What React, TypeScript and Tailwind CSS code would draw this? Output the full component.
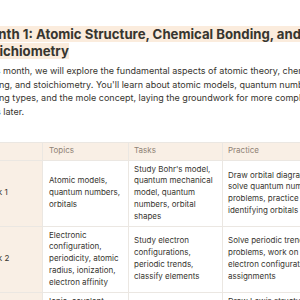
import React from 'react';

const rows = [
  {
    week: 'Week 1',
    topics: 'Atomic models, quantum numbers, orbitals',
    tasks: "Study Bohr's model, quantum mechanical model, quantum numbers, orbital shapes",
    practice: 'Draw orbital diagrams, solve quantum number problems, practice identifying orbitals',
  },
  {
    week: 'Week 2',
    topics: 'Electronic configuration, periodicity, atomic radius, ionization, electron affinity',
    tasks: 'Study electron configurations, periodic trends, classify elements',
    practice: 'Solve periodic trend problems, work on electron configuration assignments',
  },
  {
    week: 'Week 3',
    topics: 'Ionic, covalent, metallic bonding, Lewis structures, VSEPR theory, hybridization',
    tasks: 'Study bond types, molecular geometry',
    practice: 'Draw Lewis structures, predict molecular shapes, practice hybridization problems',
  },
];

export default function App() {
  return (
    <div className="w-[300px] h-[300px] overflow-hidden bg-white text-[#37352f] font-['Inter',sans-serif]">
      <div className="ml-[-25px] w-[460px] pt-[26px]">
        <h2 className="ml-[3px] w-[370px] text-[13.2px] leading-[17px] font-bold">
          <span className="bg-[#fbecdd]">Month 1: Atomic Structure, Chemical Bonding, and Stoichiometry</span>
        </h2>
        <p className="mt-[4px] w-[356px] text-[9px] leading-[13.7px]">
          In this month, we will explore the fundamental aspects of atomic theory, chemical bonding, and stoichiometry. You'll learn about atomic models, quantum numbers, bonding types, and the mole concept, laying the groundwork for more complex topics later.
        </p>
        <table className="ml-[-1px] mt-[23px] table-fixed w-[420px] border-collapse text-[8px] leading-[11.8px]">
          <colgroup>
            <col className="w-[68px]" />
            <col className="w-[86px]" />
            <col className="w-[94px]" />
            <col className="w-[99px]" />
            <col />
          </colgroup>
          <thead>
            <tr className="bg-[#f9efe5] text-[#8f8275]">
              <th className="border border-[#ebe7e2] px-[6px] py-[2.5px] text-left font-normal"></th>
              <th className="border border-[#ebe7e2] px-[6px] py-[2.5px] text-left font-normal">Topics</th>
              <th className="border border-[#ebe7e2] px-[5px] py-[2.5px] text-left font-normal">Tasks</th>
              <th className="border border-[#ebe7e2] px-[5px] py-[2.5px] text-left font-normal">Practice</th>
              <th className="border border-[#ebe7e2] px-[5px] py-[2.5px] text-left font-normal">Notes</th>
            </tr>
          </thead>
          <tbody>
            {rows.map((r, i) => {
              const al = i === 2 ? 'align-top' : 'align-middle';
              return (
                <tr key={r.week}>
                  <td className="bg-[#f9efe5] border border-[#ebe7e2] px-[6px] py-[3px] align-middle">{r.week}</td>
                  <td className={`border border-[#ebe7e2] px-[6px] py-[3px] ${al}`}>{r.topics}</td>
                  <td className="border border-[#ebe7e2] px-[5px] py-[3px] align-middle">{r.tasks}</td>
                  <td className={`border border-[#ebe7e2] px-[5px] py-[3px] ${al}`}>{r.practice}</td>
                  <td className="border border-[#ebe7e2] px-[5px] py-[3px] align-middle"></td>
                </tr>
              );
            })}
          </tbody>
        </table>
      </div>
    </div>
  );
}
